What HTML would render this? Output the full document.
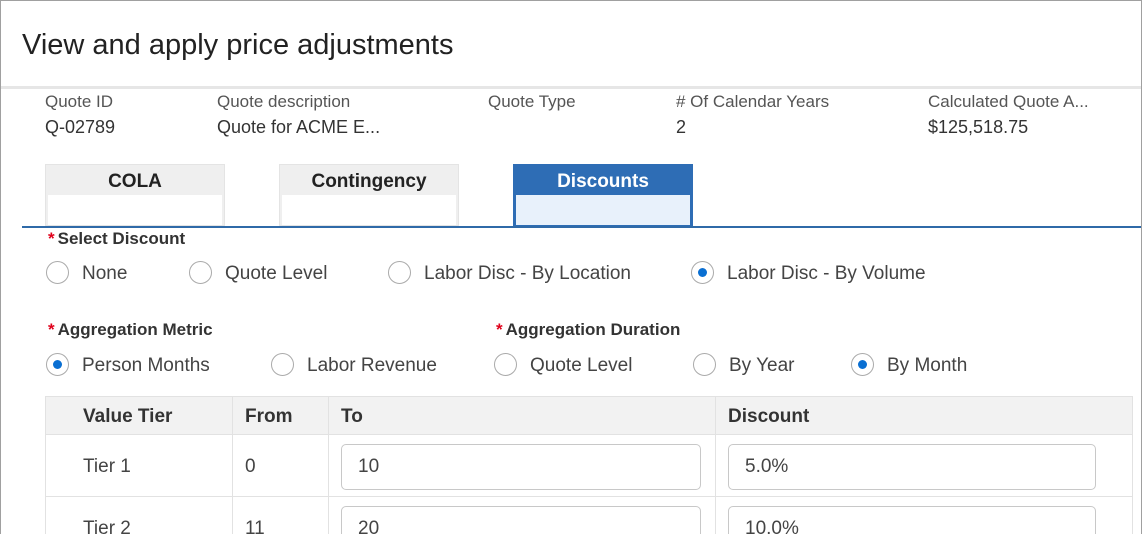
<!DOCTYPE html>
<html><head><style>
*{box-sizing:border-box;margin:0;padding:0}
html,body{width:1142px;height:534px;overflow:hidden}
body{background:#fff;font-family:"Segoe UI","Liberation Sans",sans-serif;color:#333;position:relative}
.frame{position:absolute;left:0;top:0;width:1142px;height:534px;border:1px solid #a0a0a0;border-bottom:none;z-index:5;pointer-events:none}
.a{position:absolute;white-space:nowrap}
.title{left:22px;top:29px;font-size:29px;color:#222}
.hl{position:absolute;left:1px;top:86px;width:1140px;height:3px;background:#e6e6e6}
.lab{font-size:17px;color:#555}
.val{font-size:18px;color:#333}
.tab{position:absolute;top:164px;width:180px;height:62px;background:#efefef;border:1px solid #e4e4e4}
.tab div{height:30px;text-align:center;font-weight:bold;font-size:19px;line-height:34px;color:#222}
.tab span{display:block;margin:0 2px;height:30px;background:#fff}
.tab.on{background:#2e6db5;border-color:#2e6db5}
.tab.on div{color:#fff}
.tab.on span{background:#e8f1fb}
.bl{position:absolute;left:22px;top:226px;width:1120px;height:2px;background:#2f6aa8}
.req{font-size:17px;font-weight:bold;color:#333}
.req b{color:#e0001b;font-weight:bold;margin-right:3px}
.r{position:absolute;font-size:19px;color:#444;white-space:nowrap}
.r i{position:absolute;left:-36px;top:-2px;width:23px;height:23px;border:1px solid #aaa;border-radius:50%;background:#fff}
.r i.on::after{content:"";position:absolute;left:6px;top:6px;width:9px;height:9px;border-radius:50%;background:#0a6fd2}
table{position:absolute;left:45px;top:396px;border-collapse:collapse;font-size:19px}
td,th{border:1px solid #e2e2e2;height:38px;text-align:left;padding-left:12px;color:#444;padding-top:2px}
th{background:#f2f2f2;font-weight:bold;color:#333}
td{height:62px}
.in{width:360px;height:46px;border:1px solid #c8c8c8;border-radius:5px;padding-left:16px;line-height:44px}
</style></head><body>
<div class="frame"></div>
<div class="a title">View and apply price adjustments</div>
<div class="hl"></div>
<div class="a lab" style="left:45px;top:92px">Quote ID</div>
<div class="a val" style="left:45px;top:117px">Q-02789</div>
<div class="a lab" style="left:217px;top:92px">Quote description</div>
<div class="a val" style="left:217px;top:117px">Quote for ACME E...</div>
<div class="a lab" style="left:488px;top:92px">Quote Type</div>
<div class="a lab" style="left:676px;top:92px"># Of Calendar Years</div>
<div class="a val" style="left:676px;top:117px">2</div>
<div class="a lab" style="left:928px;top:92px">Calculated Quote A...</div>
<div class="a val" style="left:928px;top:117px">$125,518.75</div>
<div class="tab" style="left:45px"><div>COLA</div><span></span></div>
<div class="tab" style="left:279px"><div>Contingency</div><span></span></div>
<div class="tab on" style="left:513px"><div>Discounts</div><span></span></div>
<div class="bl"></div>
<div class="a req" style="left:48px;top:229px"><b>*</b>Select Discount</div>
<div class="r" style="left:82px;top:263px"><i></i>None</div>
<div class="r" style="left:225px;top:263px"><i></i>Quote Level</div>
<div class="r" style="left:424px;top:263px"><i></i>Labor Disc - By Location</div>
<div class="r" style="left:727px;top:263px"><i class="on"></i>Labor Disc - By Volume</div>
<div class="a req" style="left:48px;top:320px"><b>*</b>Aggregation Metric</div>
<div class="a req" style="left:496px;top:320px"><b>*</b>Aggregation Duration</div>
<div class="r" style="left:82px;top:355px"><i class="on"></i>Person Months</div>
<div class="r" style="left:307px;top:355px"><i></i>Labor Revenue</div>
<div class="r" style="left:530px;top:355px"><i></i>Quote Level</div>
<div class="r" style="left:729px;top:355px"><i></i>By Year</div>
<div class="r" style="left:887px;top:355px"><i class="on"></i>By Month</div>
<table>
<tr><th style="width:187px;padding-left:37px">Value Tier</th><th style="width:96px">From</th><th style="width:387px">To</th><th style="width:417px">Discount</th></tr>
<tr><td style="padding-left:37px">Tier 1</td><td>0</td><td><div class="in">10</div></td><td><div class="in" style="width:368px">5.0%</div></td></tr>
<tr><td style="padding-left:37px">Tier 2</td><td>11</td><td><div class="in">20</div></td><td><div class="in" style="width:368px">10.0%</div></td></tr>
</table>
</body></html>
